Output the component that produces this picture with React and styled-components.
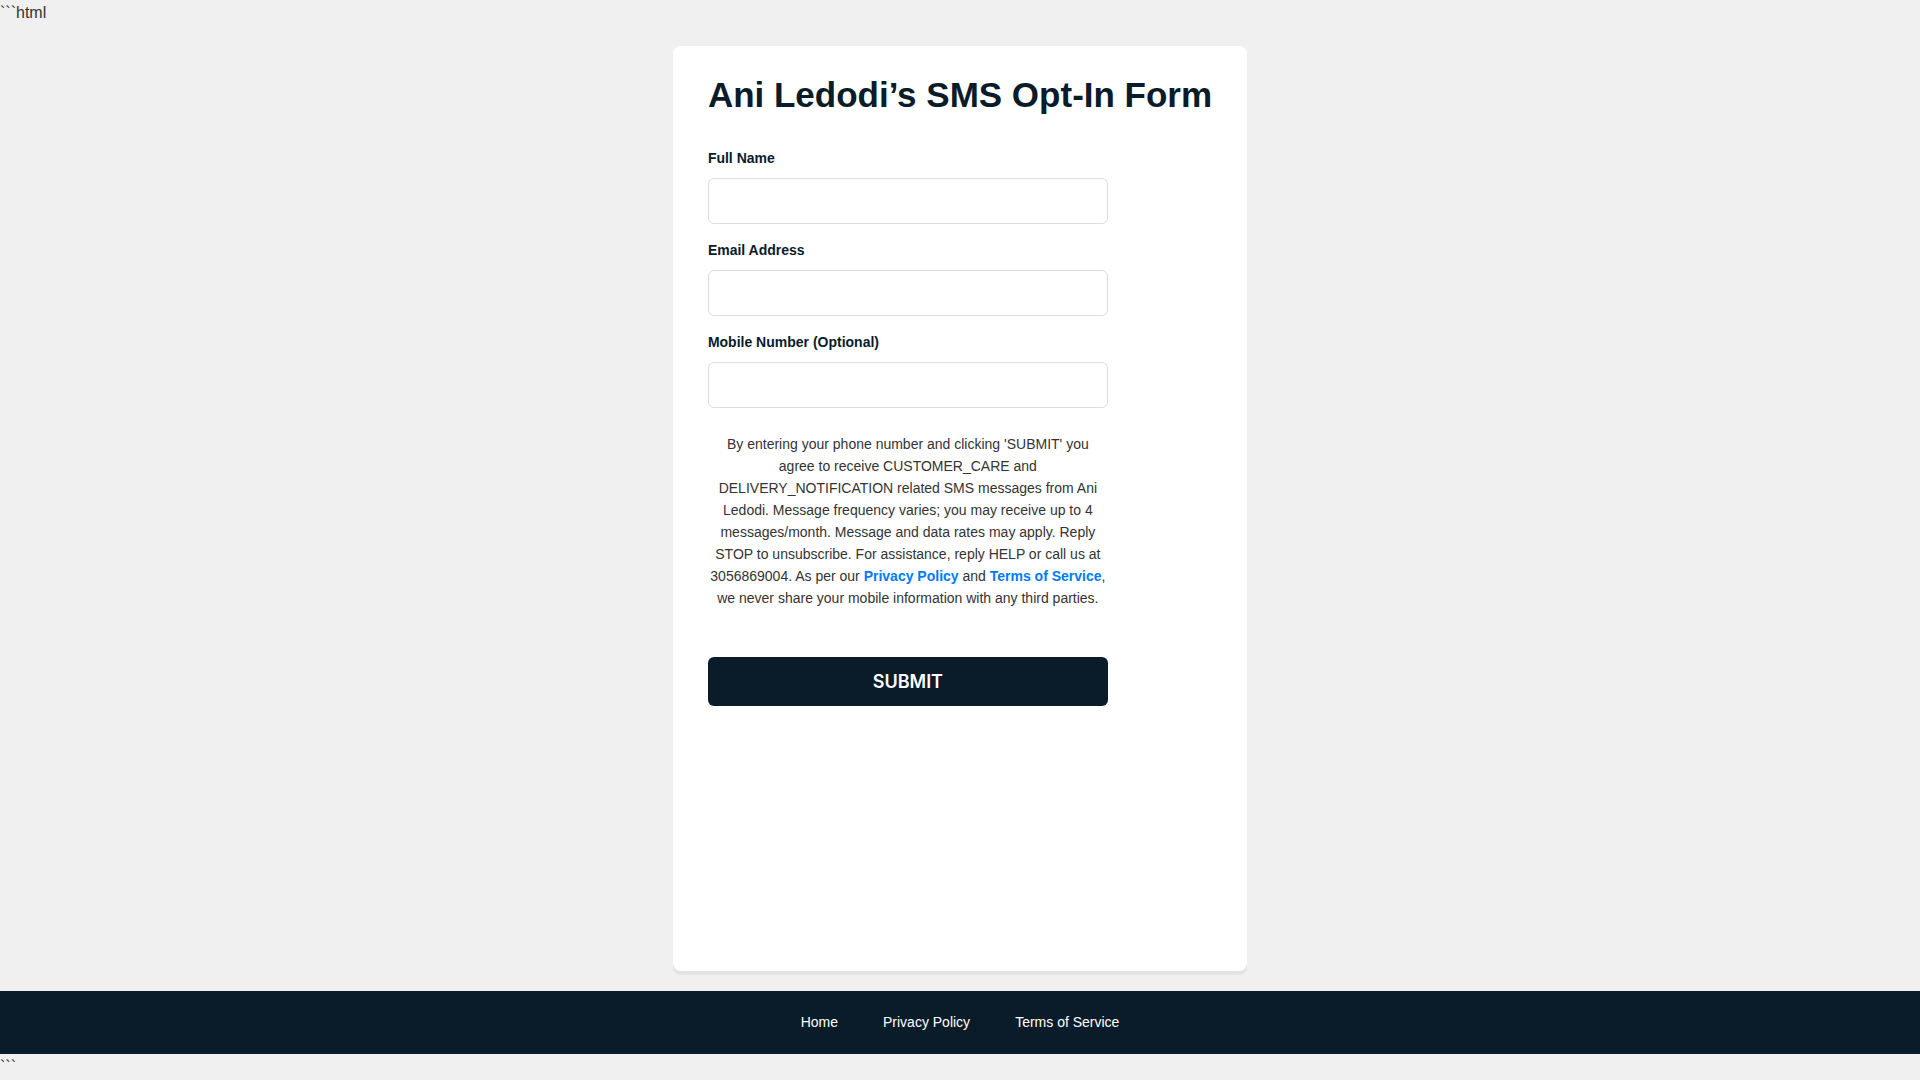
import React, { useState } from "react";
import styled, { createGlobalStyle } from "styled-components";

const fields = [
  { id: "name", label: "Full Name", type: "text" },
  { id: "email", label: "Email Address", type: "email" },
  { id: "phone", label: "Mobile Number (Optional)", type: "tel" },
];

const App = () => {
  const [values, setValues] = useState({ name: "", email: "", phone: "" });

  const onChange = (e) => {
    setValues({ ...values, [e.target.name]: e.target.value });
  };

  return (
    <Page>
      <GlobalStyle />
      <StrayText>```html</StrayText>
      <Card>
        <Title>Ani Ledodi’s SMS Opt-In Form</Title>
        <Form onSubmit={(e) => e.preventDefault()}>
          {fields.map((field) => (
            <Field key={field.id}>
              <Label htmlFor={field.id}>{field.label}</Label>
              <Input
                id={field.id}
                name={field.id}
                type={field.type}
                value={values[field.id]}
                onChange={onChange}
              />
            </Field>
          ))}
          <Consent>
            By entering your phone number and clicking 'SUBMIT' you agree to
            receive CUSTOMER_CARE and DELIVERY_NOTIFICATION related SMS messages
            from Ani Ledodi. Message frequency varies; you may receive up to 4
            messages/month. Message and data rates may apply. Reply STOP to
            unsubscribe. For assistance, reply HELP or call us at 3056869004. As
            per our <ConsentLink href="#privacy">Privacy Policy</ConsentLink> and{" "}
            <ConsentLink href="#terms">Terms of Service</ConsentLink>, we never
            share your mobile information with any third parties.
          </Consent>
          <SubmitButton type="submit">SUBMIT</SubmitButton>
        </Form>
      </Card>
      <Footer>
        <FooterLink href="#home">Home</FooterLink>
        <FooterLink href="#privacy">Privacy Policy</FooterLink>
        <FooterLink href="#terms">Terms of Service</FooterLink>
      </Footer>
      <StrayText>```</StrayText>
    </Page>
  );
};

export default App;

const GlobalStyle = createGlobalStyle`
  * {
    box-sizing: border-box;
  }
  body {
    margin: 0;
    background-color: #f0f0f0;
    color: #333333;
    font-family: "Liberation Sans", Arial, sans-serif;
    font-size: 16px;
    line-height: 26px;
  }
`;

const Page = styled.div`
  min-height: 100vh;
  display: flex;
  flex-direction: column;
`;
const StrayText = styled.div`
  height: 26px;
`;
const Card = styled.main`
  flex: 1;
  max-width: 100%;
  margin: 20px auto;
  padding: 20px 35px;
  border-radius: 8px;
  background-color: #ffffff;
  box-shadow: 0 4px 0 rgba(0, 0, 0, 0.05);
`;
const Title = styled.h1`
  margin: 0 0 24px;
  color: #0a1b2a;
  font-size: 35px;
  line-height: 57px;
`;
const Form = styled.form`
  max-width: 400px;
  display: flex;
  flex-direction: column;
  gap: 15px;
`;
const Field = styled.div`
  display: flex;
  flex-direction: column;
  gap: 8px;
`;
const Label = styled.label`
  color: #0a1b2a;
  font-size: 14px;
  font-weight: bold;
  line-height: 23px;
`;
const Input = styled.input`
  width: 100%;
  height: 46px;
  padding: 0 12px;
  border: 1px solid #dddddd;
  border-radius: 6px;
  background-color: #ffffff;
  font-size: 16px;
`;
const Consent = styled.p`
  margin: 10px 0 33px;
  font-size: 14px;
  line-height: 22px;
  text-align: center;
`;
const ConsentLink = styled.a`
  color: #007bff;
  font-weight: bold;
  text-decoration: none;
`;
const SubmitButton = styled.button`
  height: 49px;
  border: none;
  border-radius: 6px;
  background-color: #0a1b2a;
  color: #ffffff;
  font-family: Inter, sans-serif;
  font-size: 18px;
  font-weight: 600;
  cursor: pointer;
`;
const Footer = styled.footer`
  display: flex;
  justify-content: center;
  gap: 45px;
  padding: 20px;
  background-color: #0a1b2a;
`;
const FooterLink = styled.a`
  color: #ffffff;
  font-size: 14px;
  line-height: 23px;
  text-decoration: none;
`;
